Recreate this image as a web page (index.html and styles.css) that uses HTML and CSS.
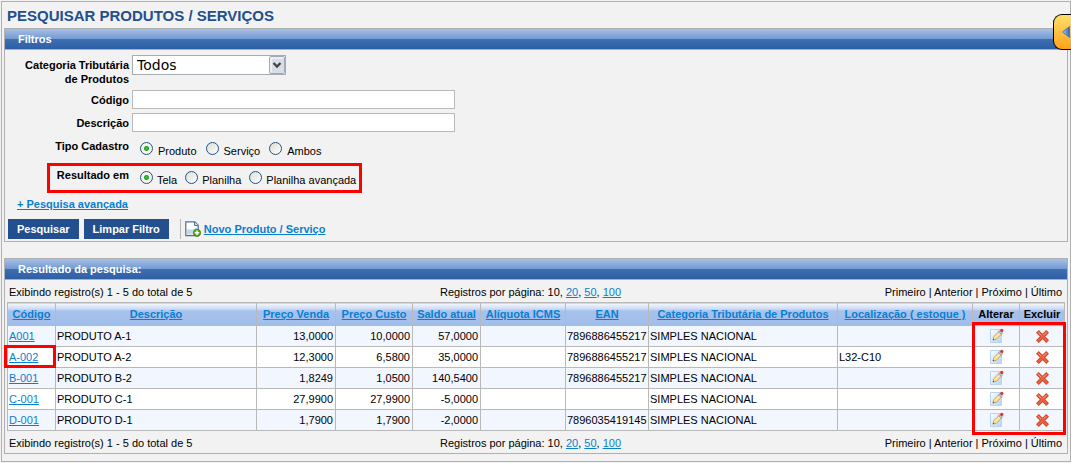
FILE: index.html
```html
<!DOCTYPE html>
<html lang="pt-BR">
<head>
<meta charset="utf-8">
<title>Pesquisar Produtos / Serviços</title>
<link rel="stylesheet" href="styles.css">
</head>
<body>
<svg class="defs" aria-hidden="true">
  <defs>
    <linearGradient id="paper" x1="0" y1="0" x2="1" y2="1"><stop offset="0" stop-color="#fff"/><stop offset="1" stop-color="#b4d2f5"/></linearGradient>
    <linearGradient id="blue" x1="0" y1="0" x2="1" y2="0"><stop offset="0" stop-color="#a9cbf5"/><stop offset="1" stop-color="#2c63c4"/></linearGradient>
    <symbol id="edit" viewBox="0 0 16 16">
      <path d="M2.500 1.500h11v13h-11z" fill="url(#paper)" stroke="#b9d3f3"/>
      <path d="M5 12l.8-3.300 5-5 2.600 2.600-5 5z" fill="#fbe08a" stroke="#b58d4c" stroke-width=".7"/>
      <path d="M7 9.500l4.500-4.500" stroke="#fff6cf"/>
      <path d="M4.700 12.300l.5-1.600 1.200 1.200z" fill="#444"/>
      <path d="M10.500 3.700l1.500-1.500 2.600 2.600-1.500 1.500z" fill="#b7c6e6" stroke="#6d88c0" stroke-width=".6"/>
      <circle cx="13.800" cy="2.400" r="1.600" fill="#e0342b"/>
    </symbol>
    <symbol id="remove" viewBox="0 0 14 14">
      <path d="M3 3l8 8M11 3l-8 8" stroke="#c4472e" stroke-width="4.200" stroke-linecap="square"/>
      <path d="M3 3l8 8M11 3l-8 8" stroke="#ea5f3d" stroke-width="2.600" stroke-linecap="square"/>
      <path d="M2.500 2.500l3 3M11 2.500l-3 3" stroke="#f6a48b" stroke-width="1"/>
    </symbol>
  </defs>
</svg>
<main class="page">
  <h1 class="title">PESQUISAR PRODUTOS / SERVIÇOS</h1>

  <section class="panel">
    <h2 class="bar">Filtros</h2>
    <form class="filters">
      <div class="row">
        <label class="name" for="categoria">Categoria Tributária<br>de Produtos</label>
        <span class="combo">
          <select id="categoria"><option>Todos</option></select>
          <svg class="arrow" viewBox="0 0 16 18" aria-hidden="true"><rect x=".5" y=".5" width="15" height="17" rx="1" fill="#d9dde8" stroke="#a3a8b8"/><path d="M2 16V2h12" fill="none" stroke="#fff"/><path d="M4.500 7l3.500 3.500L11.500 7" fill="none" stroke="#444" stroke-width="2.400"/></svg>
        </span>
      </div>
      <div class="row field">
        <label class="name" for="codigo">Código</label>
        <input class="text" id="codigo" type="text">
      </div>
      <div class="row field">
        <label class="name" for="descricao">Descrição</label>
        <input class="text" id="descricao" type="text">
      </div>
      <div class="row choice" role="radiogroup" aria-labelledby="tipo">
        <span class="name" id="tipo">Tipo Cadastro</span>
        <span class="radios">
          <label class="option"><input type="radio" name="tipo" checked><span>Produto</span></label>
          <label class="option"><input type="radio" name="tipo"><span>Serviço</span></label>
          <label class="option"><input type="radio" name="tipo"><span>Ambos</span></label>
        </span>
      </div>
      <div class="row choice marked" role="radiogroup" aria-labelledby="resultado">
        <span class="name" id="resultado">Resultado em</span>
        <span class="radios">
          <label class="option"><input type="radio" name="saida" checked><span>Tela</span></label>
          <label class="option"><input type="radio" name="saida"><span>Planilha</span></label>
          <label class="option"><input type="radio" name="saida"><span>Planilha avançada</span></label>
        </span>
      </div>
      <a class="advanced" href="#">+ Pesquisa avançada</a>
      <div class="actions">
        <button class="button" type="button">Pesquisar</button>
        <button class="button" type="reset">Limpar Filtro</button>
        <span class="new">
          <svg class="newicon" viewBox="0 0 16 16" aria-hidden="true">
            <path d="M.8.8h9l3.400 3.400v10.500H.8z" fill="#fff" stroke="#52708c" stroke-width="1.200"/>
            <path d="M2 8c3 1 6 1 10-2v7.500H2z" fill="#b9dcf0"/>
            <path d="M9.500 1v3.500H13" fill="#d7e8f3" stroke="#52708c"/>
            <circle cx="12" cy="11.800" r="3.600" fill="#65a61c" stroke="#3f7c0b" stroke-width=".8"/>
            <path d="M12 9.600v4.400M9.800 11.800h4.400" stroke="#fff" stroke-width="1.400"/>
          </svg>
          <a href="#">Novo Produto / Serviço</a>
        </span>
      </div>
    </form>
  </section>

  <section class="panel results">
    <h2 class="bar">Resultado da pesquisa:</h2>
    <div class="pager">
      <span>Exibindo registro(s) 1 - 5 do total de 5</span>
      <span>Registros por página: 10, <a href="#">20</a>, <a href="#">50</a>, <a href="#">100</a></span>
      <span>Primeiro | Anterior | Próximo | Último</span>
    </div>
    <div class="tablebox">
      <table class="grid">
        <colgroup><col class="c1"><col class="c2"><col class="c3"><col class="c4"><col class="c5"><col class="c6"><col class="c7"><col class="c8"><col class="c9"><col class="c10"><col class="c11"></colgroup>
        <thead>
          <tr><th><a href="#">Código</a></th><th><a href="#">Descrição</a></th><th><a href="#">Preço Venda</a></th><th><a href="#">Preço Custo</a></th><th><a href="#">Saldo atual</a></th><th><a href="#">Alíquota ICMS</a></th><th><a href="#">EAN</a></th><th><a href="#">Categoria Tributária de Produtos</a></th><th><a href="#">Localização ( estoque )</a></th><th>Alterar</th><th>Excluir</th></tr>
        </thead>
        <tbody>
          <tr><td><a href="#">A001</a></td><td>PRODUTO A-1</td><td class="num">13,0000</td><td class="num">10,0000</td><td class="num">57,0000</td><td></td><td>7896886455217</td><td>SIMPLES NACIONAL</td><td></td><td class="act"><button type="button" aria-label="Alterar"><svg class="edit"><use href="#edit"/></svg></button></td><td class="act"><button type="button" aria-label="Excluir"><svg class="remove"><use href="#remove"/></svg></button></td></tr>
          <tr><td class="picked"><a href="#">A-002</a></td><td>PRODUTO A-2</td><td class="num">12,3000</td><td class="num">6,5800</td><td class="num">35,0000</td><td></td><td>7896886455217</td><td>SIMPLES NACIONAL</td><td>L32-C10</td><td class="act"><button type="button" aria-label="Alterar"><svg class="edit"><use href="#edit"/></svg></button></td><td class="act"><button type="button" aria-label="Excluir"><svg class="remove"><use href="#remove"/></svg></button></td></tr>
          <tr><td><a href="#">B-001</a></td><td>PRODUTO B-2</td><td class="num">1,8249</td><td class="num">1,0500</td><td class="num">140,5400</td><td></td><td>7896886455217</td><td>SIMPLES NACIONAL</td><td></td><td class="act"><button type="button" aria-label="Alterar"><svg class="edit"><use href="#edit"/></svg></button></td><td class="act"><button type="button" aria-label="Excluir"><svg class="remove"><use href="#remove"/></svg></button></td></tr>
          <tr><td><a href="#">C-001</a></td><td>PRODUTO C-1</td><td class="num">27,9900</td><td class="num">27,9900</td><td class="num">-5,0000</td><td></td><td></td><td>SIMPLES NACIONAL</td><td></td><td class="act"><button type="button" aria-label="Alterar"><svg class="edit"><use href="#edit"/></svg></button></td><td class="act"><button type="button" aria-label="Excluir"><svg class="remove"><use href="#remove"/></svg></button></td></tr>
          <tr><td><a href="#">D-001</a></td><td>PRODUTO D-1</td><td class="num">1,7900</td><td class="num">1,7900</td><td class="num">-2,0000</td><td></td><td>7896035419145</td><td>SIMPLES NACIONAL</td><td></td><td class="act"><button type="button" aria-label="Alterar"><svg class="edit"><use href="#edit"/></svg></button></td><td class="act"><button type="button" aria-label="Excluir"><svg class="remove"><use href="#remove"/></svg></button></td></tr>
        </tbody>
      </table>
      <div class="highlight"></div>
    </div>
    <div class="pager">
      <span>Exibindo registro(s) 1 - 5 do total de 5</span>
      <span>Registros por página: 10, <a href="#">20</a>, <a href="#">50</a>, <a href="#">100</a></span>
      <span>Primeiro | Anterior | Próximo | Último</span>
    </div>
  </section>
</main>
<button class="drawer" type="button" aria-label="Abrir painel"><svg viewBox="0 0 8 12" aria-hidden="true"><path d="M7.500.5v11L.5 6z" fill="url(#blue)" stroke="#3d6fc0" stroke-width=".8"/></svg></button>
</body>
</html>
```
FILE: styles.css
```css
* { box-sizing: border-box; }
body {
  margin: 0;
  padding: 1px 0 0 1px;
  background: #f2f2f2;
  color: #000;
  font: 11px/14px "Liberation Sans", Arial, sans-serif;
  position: relative;
  overflow-x: hidden;
}
.defs { position: absolute; width: 0; height: 0; }
a { color: #0a7fd0; text-decoration: underline; }
.page { border: 1px solid #b0b0b0; padding: 2px 2px 7px 2px; }
.title {
  margin: 0;
  padding: 3px 3px 3px;
  font-size: 15px;
  line-height: 18px;
  font-weight: bold;
  color: #234f8e;
}
.panel { border: 1px solid #b0b0b0; }
.results { margin-top: 16px; }
.bar {
  margin: 0;
  height: 21px;
  padding-left: 13px;
  border-bottom: 1px solid #b0b0b0;
  background: linear-gradient(#a5c0e7 0, #7399d0 10px, #3c6fb5 10px, #2f5ea3 100%);
  color: #fff;
  font-size: 11px;
  line-height: 21px;
}
.filters { padding: 5px 3px 2px; }
.row { display: grid; grid-template-columns: 121px 1fr; column-gap: 3px; }
.name { font-weight: bold; text-align: right; padding-top: 3px; white-space: nowrap; }
.combo { position: relative; width: 154px; height: 20px; }
.combo select {
  appearance: none;
  width: 100%;
  height: 20px;
  padding: 0 20px 0 4px;
  border: 1px solid #a5acb2;
  border-radius: 0;
  background: #fff;
  color: #000;
  font: 14px "DejaVu Sans", Verdana, sans-serif;
}
.arrow { position: absolute; right: 1px; top: 1px; width: 16px; height: 18px; pointer-events: none; }
.field { margin-top: 4px; }
.text { width: 323px; height: 19px; border: 1px solid #b9b9b9; background: #fff; padding: 1px 3px; font: inherit; }
.choice { height: 25px; margin-top: 4px; }
.radios { display: flex; gap: 9px; padding: 6px 0 0 8px; }
.option { display: flex; gap: 5px; white-space: nowrap; }
.option span { padding-top: 2px; }
.option input {
  appearance: none;
  flex: none;
  width: 13px;
  height: 13px;
  margin: 0;
  border: 1px solid #285480;
  border-radius: 50%;
  background: linear-gradient(135deg, #dcdcd7, #fff);
}
.option input:checked { background: radial-gradient(circle at center, #46c846 0, #21a121 2px, #f4f4f0 3px); }
.marked {
  width: 315px;
  height: 30px;
  margin: 2px 0 0 39px;
  border: 3px solid #f00;
  grid-template-columns: 79px 1fr;
}
.marked .name { padding-top: 2px; }
.marked .radios { padding-top: 5px; gap: 8px; }
.marked .option { gap: 4px; }
.advanced { display: inline-block; margin: 4px 0 0 9px; font-weight: bold; }
.actions { display: flex; align-items: center; gap: 5px; margin-top: 8px; }
.button {
  height: 20px;
  padding: 0 9px;
  border: 0;
  background: #234f8e;
  color: #fff;
  font: bold 11px/20px "Liberation Sans", Arial, sans-serif;
}
.new { display: flex; align-items: center; gap: 3px; height: 20px; margin-left: 6px; padding-left: 4px; border-left: 1px solid #b9b9b9; font-weight: bold; }
.newicon { width: 16px; height: 16px; }
.pager { display: grid; grid-template-columns: 1fr auto 1fr; padding: 5px 5px 3px 4px; }
.pager span:nth-child(2) { padding-right: 10px; }
.pager span:nth-child(3) { text-align: right; }
.tablebox { position: relative; margin: 0 2px 0 2px; }
.grid { width: 100%; table-layout: fixed; border-collapse: collapse; }
.grid th, .grid td { border: 1px solid #b9b9b9; padding: 0 1px; white-space: nowrap; }
.grid th { height: 23px; background: linear-gradient(#f4f7fd 0, #c9d8f4 6px, #a7c2ec 7px, #a1bdea 100%); }
.grid td { height: 21px; }
.grid tbody tr { background: #fff; }
.grid tbody tr:nth-child(odd) { background: #f2f6ff; }
.grid .num { text-align: right; padding-right: 2px; }
.grid .act { text-align: center; }
.act button { display: block; margin: 0 auto; padding: 0; border: 0; background: none; }
.act svg { display: block; }
.edit { width: 16px; height: 16px; }
.remove { width: 13px; height: 13px; }
.c1 { width: 48px; }
.c3 { width: 79px; }
.c4 { width: 77px; }
.c5 { width: 68px; }
.c6 { width: 85px; }
.c7 { width: 83px; }
.c8 { width: 189px; }
.c9 { width: 135px; }
.c10 { width: 47px; }
.c11 { width: 45px; }
.picked { position: relative; }
.picked::after { content: ""; position: absolute; inset: -2px -1px -1px -4px; border: 3px solid #f00; }
.highlight { position: absolute; right: -1px; top: 20px; bottom: -4px; width: 94px; border: 3px solid #f00; }
.drawer {
  position: absolute;
  right: 0;
  top: 14px;
  width: 18px;
  height: 36px;
  padding: 0 1px 0 0;
  border: 1px solid #000;
  border-right: 0;
  border-radius: 9px 0 0 9px;
  background: linear-gradient(#ffe06a, #ffa31a);
  display: flex;
  align-items: center;
  justify-content: flex-end;
}
.drawer svg { width: 8px; height: 12px; }
```
